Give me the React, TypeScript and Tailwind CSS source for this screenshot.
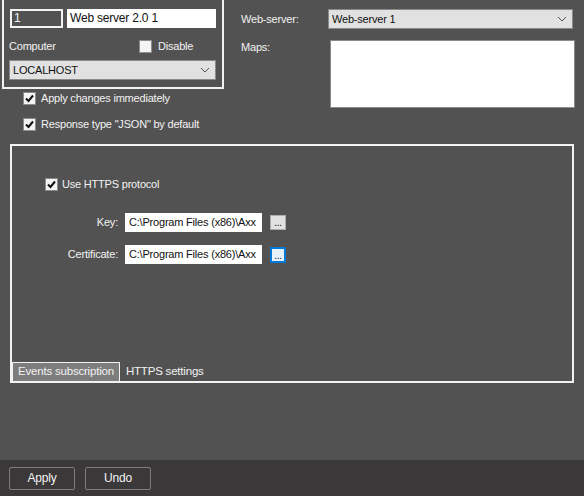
import React from "react";

const Check = ({ checked }: { checked: boolean }) => (
  <div className="w-[13px] h-[13px] border border-[#8c8c8c] bg-[#f4f4f4] flex items-center justify-center shrink-0">
    {checked && (
      <svg width="9" height="9" viewBox="0 0 9 9">
        <path d="M1 4.5 L3.5 7 L8 1.5" stroke="#111" strokeWidth="2" fill="none" />
      </svg>
    )}
  </div>
);

const Chevron = () => (
  <svg width="10" height="6" viewBox="0 0 10 6">
    <path d="M1 1 L5 5 L9 1" stroke="#555" strokeWidth="1" fill="none" />
  </svg>
);

export default function App() {
  return (
    <div
      className="w-[584px] h-[496px] bg-[#525252] text-[#f2f2f2] text-[11px] tracking-[-0.2px] flex flex-col overflow-hidden"
      style={{ fontFamily: '"Liberation Sans", Arial, sans-serif' }}
    >
      <div className="flex-1 flex flex-col">
        {/* Top section */}
        <div className="flex h-[140px]">
          <div className="flex flex-col">
            {/* left box */}
            <div className="ml-[2px] w-[222px] h-[89px] border-2 border-t-0 border-[#f2f2f2] flex flex-col">
              <div className="flex mt-[9px] ml-[6px] gap-[4px]">
                <div className="w-[53px] h-[19px] border-2 border-[#f2f2f2] px-[2px] leading-[15px] text-[12px]">1</div>
                <div className="w-[149px] h-[19px] bg-white text-[#111] px-[3px] leading-[19px] text-[12px]">Web server 2.0 1</div>
              </div>
              <div className="flex items-center mt-[12px] ml-[5px] h-[13px]">
                <span className="w-[130px]">Computer</span>
                <Check checked={false} />
                <span className="ml-[6px]">Disable</span>
              </div>
              <div className="mt-[7px] ml-[5px] w-[207px] h-[20px] bg-[#e1e1e1] border border-[#8a8a8a] text-[#111] flex items-center justify-between pl-[3px] pr-[5px]">
                <span>LOCALHOST</span>
                <Chevron />
              </div>
            </div>
            <div className="flex items-center ml-[23px] mt-[3px] gap-[5px] h-[13px]">
              <Check checked />
              <span>Apply changes immediately</span>
            </div>
            <div className="flex items-center ml-[23px] mt-[13px] gap-[5px] h-[13px]">
              <Check checked />
              <span>Response type "JSON" by default</span>
            </div>
          </div>
          {/* right */}
          <div className="ml-[17px] flex flex-col">
            <div className="flex items-center mt-[9px] h-[20px]">
              <span className="w-[87px]">Web-server:</span>
              <div className="w-[245px] h-[20px] bg-[#e1e1e1] border border-[#8a8a8a] text-[#111] flex items-center justify-between pl-[3px] pr-[5px]">
                <span>Web-server 1</span>
                <Chevron />
              </div>
            </div>
            <div className="flex mt-[11px]">
              <span className="w-[89px] leading-[13px] mt-[1px]">Maps:</span>
              <div className="w-[245px] h-[68px] bg-white border border-[#8a8a8a]" />
            </div>
          </div>
        </div>

        {/* Panel */}
        <div className="ml-[10px] mt-[4px] w-[564px] h-[239px] border-2 border-[#f2f2f2] flex flex-col">
          <div className="flex-1 flex flex-col">
            <div className="flex items-center ml-[33px] mt-[32px] gap-[4px] h-[13px]">
              <Check checked />
              <span>Use HTTPS protocol</span>
            </div>
            <div className="flex items-center mt-[22px] h-[19px]">
              <span className="w-[107px] text-right pr-[1px]">Key:</span>
              <div className="ml-[6px] w-[137px] h-[19px] bg-white text-[#111] pl-[4px] leading-[19px] overflow-hidden whitespace-nowrap">
                C:\Program Files (x86)\Axx
              </div>
              <div className="ml-[8px] w-[16px] h-[15px] bg-[#e1e1e1] border border-[#adadad] flex items-end justify-center text-[#111] text-[10px] leading-[10px] pb-[1px]">
                ...
              </div>
            </div>
            <div className="flex items-center mt-[13px] h-[19px]">
              <span className="w-[107px] text-right pr-[1px]">Certificate:</span>
              <div className="ml-[6px] w-[137px] h-[19px] bg-white text-[#111] pl-[4px] leading-[19px] overflow-hidden whitespace-nowrap">
                C:\Program Files (x86)\Axx
              </div>
              <div className="ml-[8px] w-[16px] h-[16px] bg-[#e5f1fb] border-2 border-[#0078d7] flex items-end justify-center text-[#111] text-[10px] leading-[10px]">
                ...
              </div>
            </div>
          </div>
          <div className="flex items-end h-[19px]">
            <div className="h-[19px] px-[5px] bg-[#7d7d7d] border border-b-0 border-[#f2f2f2] flex items-center text-[11.5px]">
              Events subscription
            </div>
            <div className="h-[19px] pl-[6px] flex items-center text-[11.5px]">HTTPS settings</div>
          </div>
        </div>
      </div>

      {/* Bottom bar */}
      <div className="h-[36px] bg-[#3a3838] flex items-center gap-[10px] pl-[9px]">
        <button className="w-[66px] h-[23px] border border-[#7d7d7d] rounded-[2px] text-[12px] text-[#f2f2f2]">Apply</button>
        <button className="w-[66px] h-[23px] border border-[#7d7d7d] rounded-[2px] text-[12px] text-[#f2f2f2]">Undo</button>
      </div>
    </div>
  );
}
